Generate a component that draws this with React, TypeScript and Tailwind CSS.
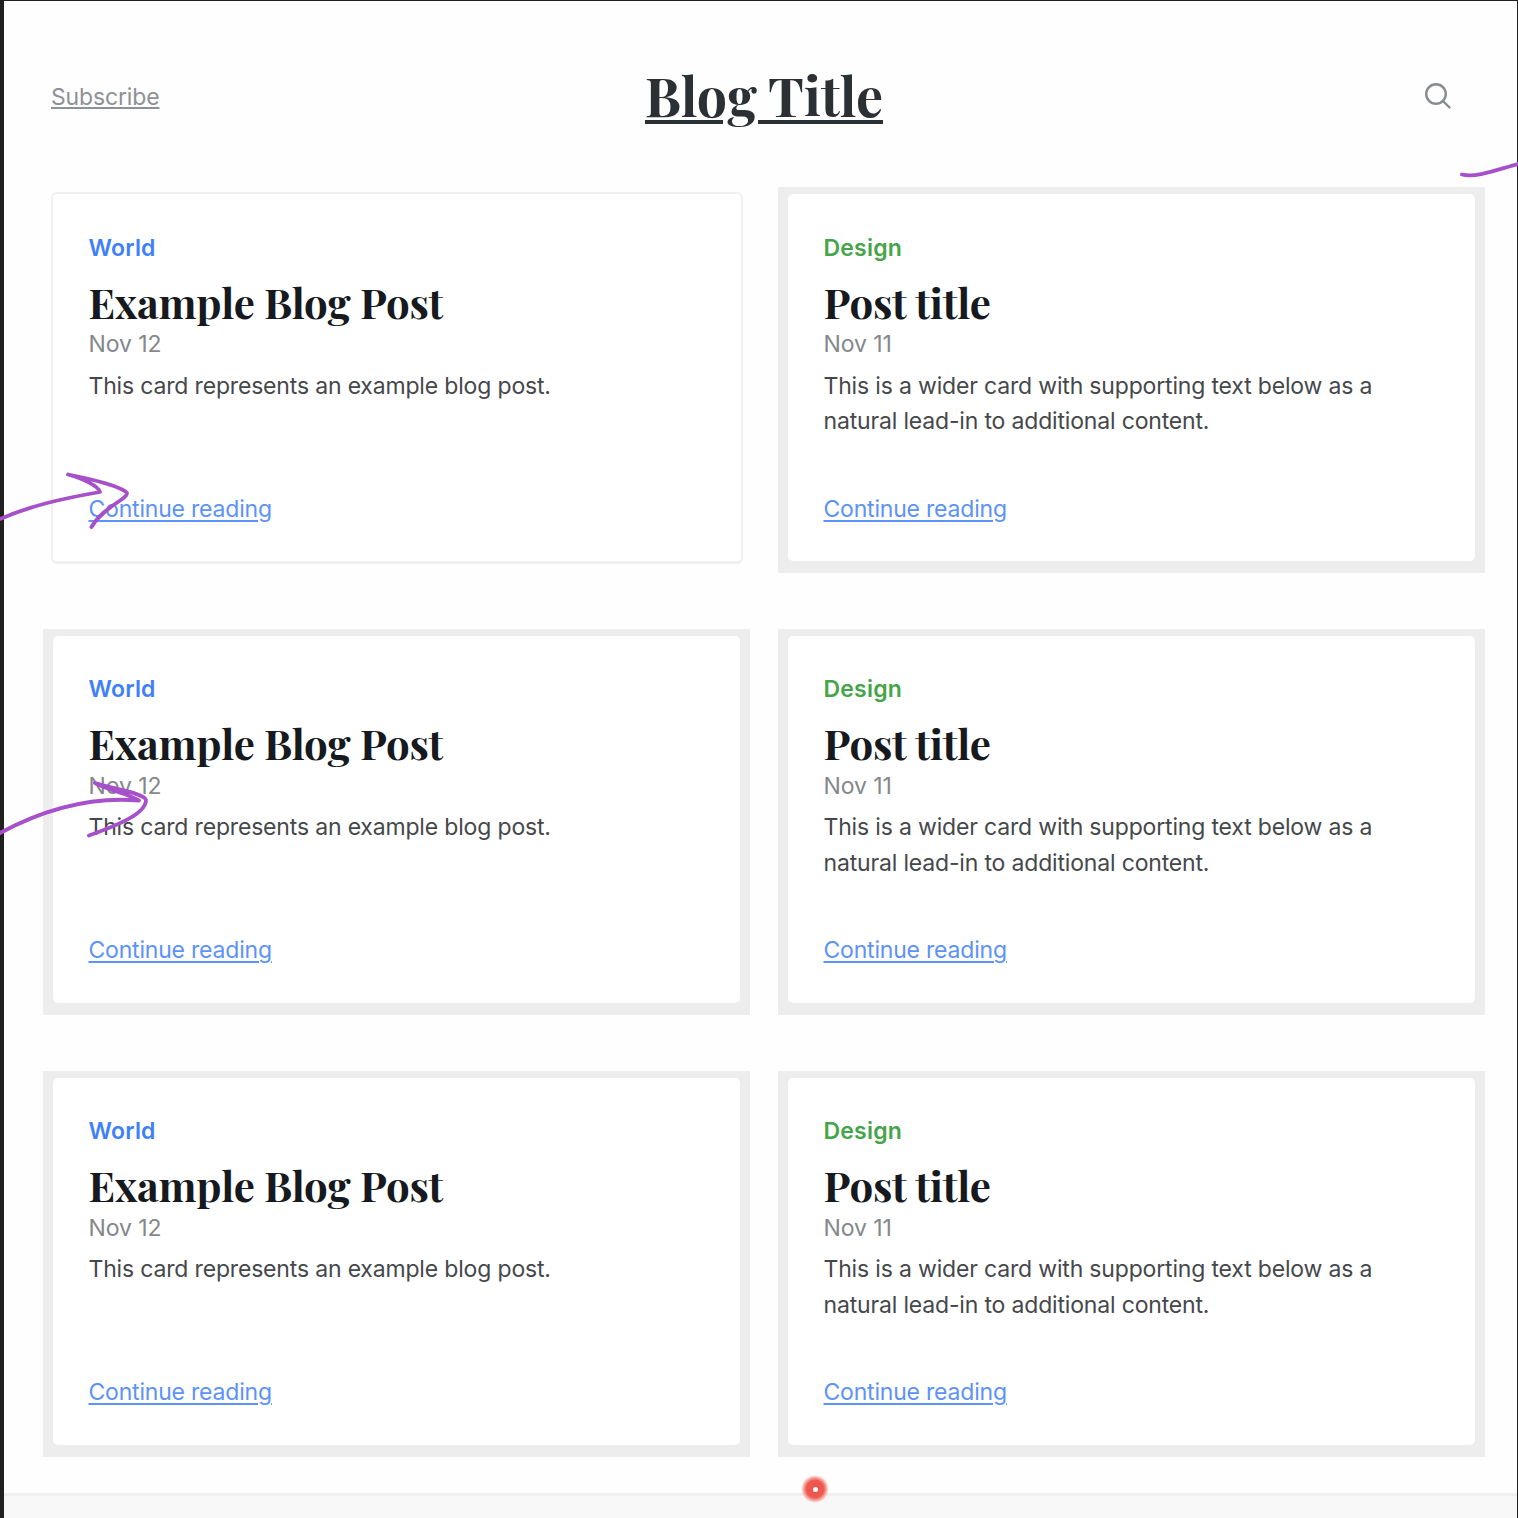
type Post = {
  category: string;
  color: string;
  title: string;
  date: string;
  body: string[];
};

const world: Post = {
  category: "World",
  color: "text-[#3f80fb]",
  title: "Example Blog Post",
  date: "Nov 12",
  body: ["This card represents an example blog post."],
};

const design: Post = {
  category: "Design",
  color: "text-[#46a44a]",
  title: "Post title",
  date: "Nov 11",
  body: ["This is a wider card with supporting text below as a", "natural lead-in to additional content."],
};

const posts = [world, design, world, design, world, design];

function Card({ post, plain }: { post: Post; plain: boolean }) {
  return (
    <article
      className={
        plain
          ? "h-[386px] pt-[5px] pr-[7px] pb-[9px] pl-[8px]"
          : "h-[386px] bg-[#ededed] pt-[7px] pr-[10px] pb-[12px] pl-[10px]"
      }
    >
      <div
        className={
          plain
            ? "flex h-full flex-col rounded-[6px] border-2 border-b-[3px] border-[#f0f0f0] bg-white px-[35.5px] pt-[35.5px] pb-[34.5px]"
            : "flex h-full flex-col rounded-[5px] bg-white px-[35.5px] pt-[35.5px] pb-[34.5px]"
        }
      >
        <strong className={`h-[36px] text-[23px] leading-[36px] font-semibold tracking-[0.2px] ${post.color}`}>
          {post.category}
        </strong>
        <h2 className="mt-[12.2px] h-[48px] font-['Playfair_Display','Liberation_Serif',serif] text-[42px] leading-[48px] font-bold tracking-[-0.27px] whitespace-nowrap text-[#16191d]">
          {post.title}
        </h2>
        <div className="mt-[0.3px] h-[36px] text-[23px] leading-[36px] tracking-[-0.1px] text-[#84888c]">{post.date}</div>
        <p className="mt-[6.6px] text-[23px] leading-[35.5px] tracking-[-0.17px] whitespace-nowrap text-[#45484b]">
          {post.body.map((line) => (
            <span key={line} className="block">
              {line}
            </span>
          ))}
        </p>
        <a className="mt-auto h-[36px] self-start text-[23px] leading-[36px] tracking-[-0.2px] text-[#5c92fa] underline decoration-[2px] underline-offset-[3px]">
          Continue reading
        </a>
      </div>
    </article>
  );
}

export default function App() {
  return (
    <div className="relative h-[1518px] w-[1518px] overflow-hidden">
      <div className="h-full overflow-hidden border-t border-r border-l-4 border-[#221f1f] bg-[#fefefe] font-['Inter',sans-serif]">
        <header className="grid h-[186px] grid-cols-[1fr_auto_1fr] items-center pt-[4px] pr-[65px] pl-[47px]">
          <a className="mt-[2px] justify-self-start text-[23px] leading-[36px] tracking-[-0.15px] text-[#8e9194] underline decoration-[2px] underline-offset-[2px]">
            Subscribe
          </a>
          <h1 className="mr-[-12.5px] ml-[12.5px] -mt-[3px] font-['Playfair_Display','Liberation_Serif',serif] text-[53.7px] leading-[70px] font-bold whitespace-nowrap text-[#2b3035] underline decoration-[3.5px] underline-offset-[3px]">
            Blog Title
          </h1>
          <svg
            className="h-[28px] w-[28px] justify-self-end"
            viewBox="0 0 28 28"
            fill="none"
            stroke="#898c8f"
            strokeWidth="2.4"
            strokeLinecap="round"
          >
            <circle cx="12" cy="12" r="9.8" />
            <path d="M19 19L25.500 25.500" />
          </svg>
        </header>
        <main className="grid grid-cols-[707px_707px] gap-x-[28px] gap-y-[55.8px] pl-[39px]">
          {posts.map((post, i) => (
            <Card key={i} post={post} plain={i === 0} />
          ))}
        </main>
        <footer className="mt-[36.400px] h-[40px] border-t-[3px] border-[#efefef] bg-[#f8f8f8]" />
      </div>

      <svg
        className="pointer-events-none absolute inset-0 h-[1518px] w-[1518px]"
        viewBox="0 0 1518 1518"
        fill="none"
        stroke="#a650ca"
        strokeWidth="3.8"
        strokeLinecap="round"
        strokeLinejoin="round"
      >
        <path d="M0 519C30 506 60 499 100 492C98 486 84 479 68 474.500C92 479 122 487 127 493C128 499 103 507 91.500 527" />
        <path d="M0 833C52 805 97 797 139 800.500C126 793 108 790 95 783C114 789 144 793 146 800C146 814 116 826 89 835.500" />
        <path d="M1462 174.500C1476 178 1496 170 1518 164" />
      </svg>
      <div className="absolute top-[1475px] left-[801px] flex h-[28px] w-[28px] items-center justify-center rounded-full bg-[radial-gradient(closest-side,#ed5248_0%,#ed5a50_62%,#f5aaa5_82%,transparent_100%)]">
        <div className="h-[5px] w-[5px] rounded-full bg-white" />
      </div>
    </div>
  );
}
